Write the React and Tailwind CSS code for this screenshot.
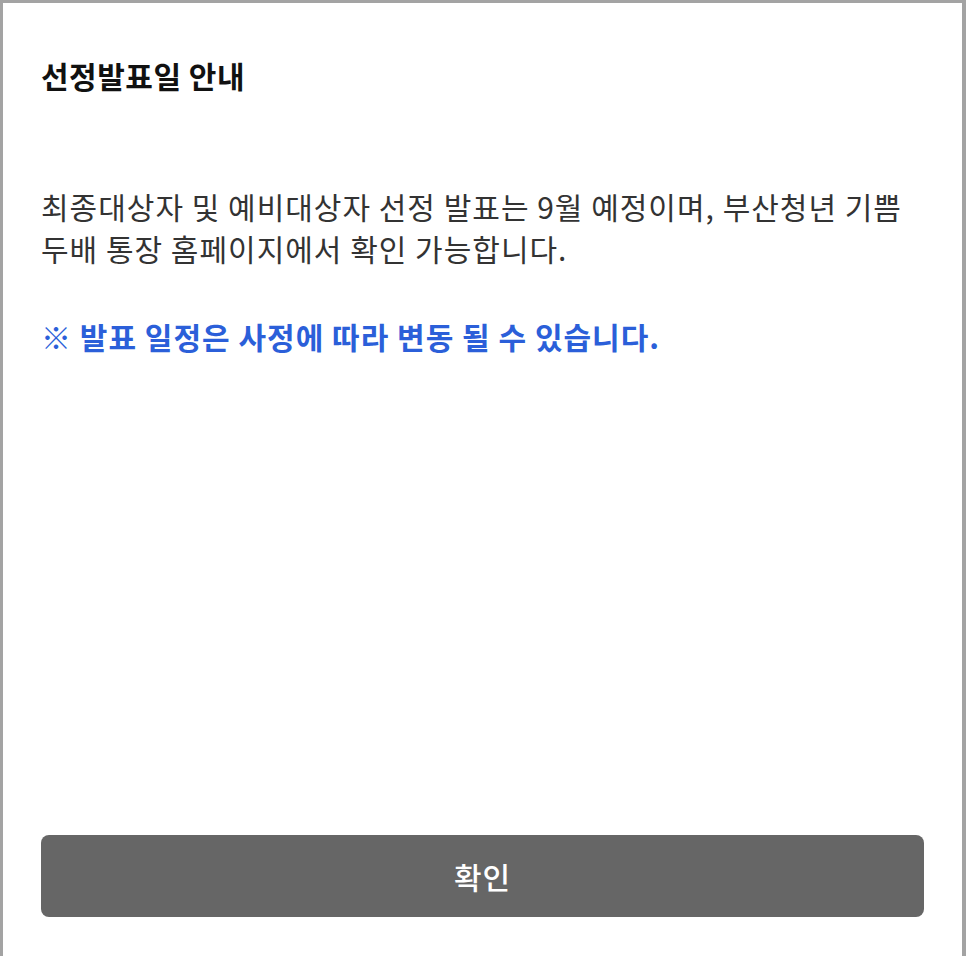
import React from "react";

const App = () => {
  return (
    <div
      className="w-[966px] h-[956px] bg-white flex flex-col border-t-[3px] border-l-[3px] border-r-[4px] border-[#a3a3a3] pt-[52px] pl-[38px] pr-[38px] pb-[39px]"
      style={{ fontFamily: '"Noto Sans CJK KR", "Noto Sans", sans-serif' }}
    >
      {/* Title */}
      <h2 className="text-[30px] leading-[40px] tracking-[0.5px] font-bold text-[#111111]">선정발표일 안내</h2>

      {/* Body */}
      <p className="mt-[90px] text-[30px] leading-[42px] tracking-[1px] text-[#333333] break-keep">
        최종대상자 및 예비대상자 선정 발표는 9월 예정이며, 부산청년 기쁨 두배 통장 홈페이지에서 확인 가능합니다.
      </p>
      <p className="mt-[46px] text-[30px] leading-[42px] tracking-[1px] font-bold text-[#2b5fd9]">
        ※ 발표 일정은 사정에 따라 변동 될 수 있습니다.
      </p>

      {/* Confirm button */}
      <button className="mt-auto h-[82px] w-full rounded-lg bg-[#666666] text-white text-[30px] tracking-[1px] font-medium">
        확인
      </button>
    </div>
  );
};

export default App;
